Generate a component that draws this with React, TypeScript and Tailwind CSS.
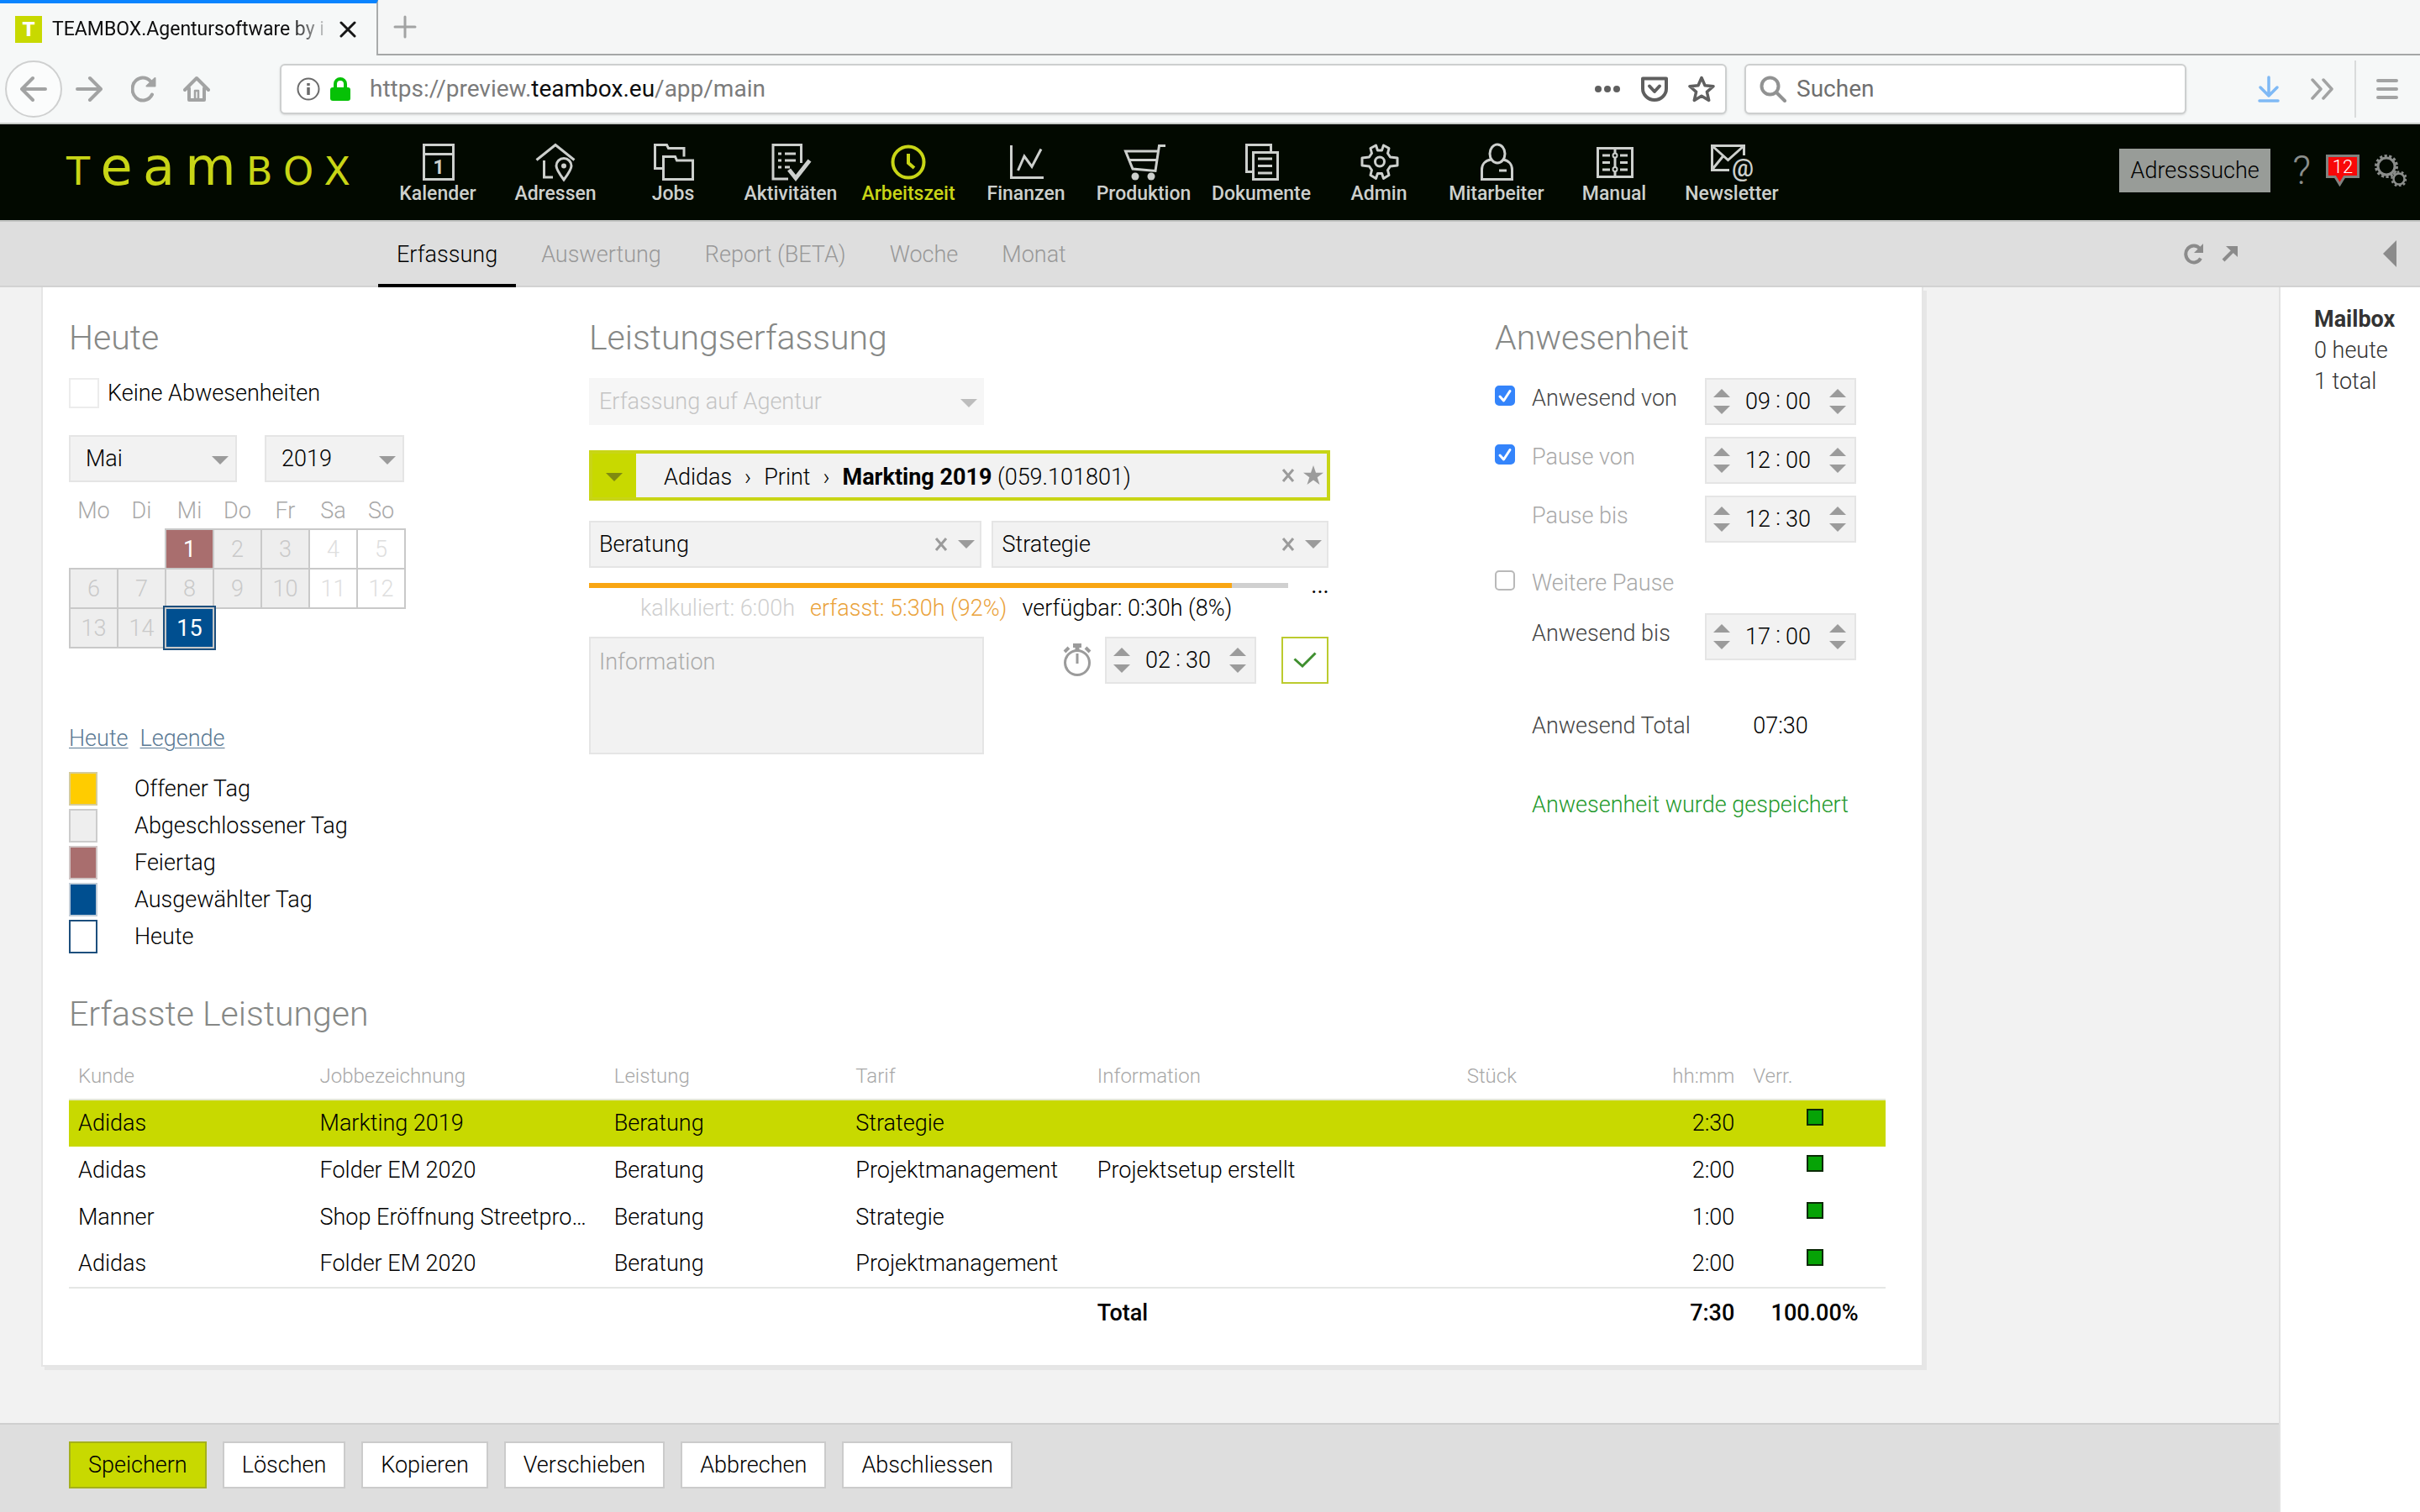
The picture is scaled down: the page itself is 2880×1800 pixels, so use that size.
import type { ReactNode } from "react";

/* ---------- helpers ---------- */

function Down({ className = "text-[#9b9b9b]" }: { className?: string }) {
  return (
    <svg viewBox="0 0 20 10" className={`pointer-events-none h-[10px] w-5 shrink-0 ${className}`} fill="currentColor" aria-hidden="true">
      <path d="M0 0h20L10 10z" />
    </svg>
  );
}

function Cross() {
  return (
    <svg viewBox="0 0 16 16" className="h-4 w-4" stroke="#9b9b9b" strokeWidth="3" aria-hidden="true">
      <path d="M2 1l12 14M14 1L2 15" />
    </svg>
  );
}

/* ---------- browser chrome ---------- */

function BrowserChrome() {
  return (
    <header className="text-[#6f6f6f]">
      <div className="flex h-[66px] bg-[#f5f6f6]">
        <div className="flex w-[450px] items-center border-t-4 border-r-2 border-t-[#0a84ff] border-r-[#a9abab] bg-[#f6f8f8] pl-[18px] pr-6">
          <span className="flex h-8 w-8 shrink-0 items-center justify-center bg-[#c8d900] text-[24px] font-black leading-none text-white">T</span>
          <span className="ml-3 flex-1 whitespace-nowrap bg-linear-to-r from-[#0c0c0d] from-85% to-transparent bg-clip-text text-[23px] text-transparent">
            TEAMBOX.Agentursoftware by i
          </span>
          <button aria-label="Tab schliessen" className="ml-2">
            <svg viewBox="0 0 20 20" className="h-5 w-5" stroke="#161616" strokeWidth="3" strokeLinecap="round">
              <path d="M2 2l16 16M18 2L2 18" />
            </svg>
          </button>
        </div>
        <div className="flex flex-1 items-center border-b-2 border-[#a5a7a7] pl-[18px]">
          <button aria-label="Neuer Tab">
            <svg viewBox="0 0 28 28" className="h-7 w-7" stroke="#a2a3a3" strokeWidth="3" strokeLinecap="round">
              <path d="M14 2v24M2 14h24" />
            </svg>
          </button>
        </div>
      </div>
      <div className="flex h-[82px] items-center border-b-2 border-[#c9ccc9] bg-[#f6f8f8] pl-[6px] pr-[26px] text-[#a2a3a3]">
        <button aria-label="Zurück" className="flex h-[68px] w-[68px] items-center justify-center rounded-full border-2 border-[#cfd0d0] bg-[#fbfcfc]">
          <svg viewBox="0 0 32 32" className="h-8 w-8" fill="none" stroke="currentColor" strokeWidth="4" strokeLinecap="round" strokeLinejoin="round">
            <path d="M30 16H3M15 3L2 16l13 13" />
          </svg>
        </button>
        <button aria-label="Vor" className="ml-4">
          <svg viewBox="0 0 32 32" className="h-8 w-8" fill="none" stroke="currentColor" strokeWidth="4" strokeLinecap="round" strokeLinejoin="round">
            <path d="M2 16h27M17 3l13 13-13 13" />
          </svg>
        </button>
        <button aria-label="Neu laden" className="ml-[34px]">
          <svg viewBox="0 0 32 32" className="h-8 w-8" fill="none" stroke="currentColor" strokeWidth="4" strokeLinecap="round">
            <path d="M25 22.500A12.500 13.500 0 1 1 25 9.500" />
            <path d="M28.500 3v9.500H18.500z" fill="currentColor" strokeWidth="2" strokeLinejoin="round" />
          </svg>
        </button>
        <button aria-label="Startseite" className="ml-[30px]">
          <svg viewBox="0 0 32 32" className="h-8 w-8" fill="none" stroke="currentColor" strokeWidth="4" strokeLinecap="round" strokeLinejoin="round">
            <path d="M2 17L16 3l14 14M7 15v14h18V15" />
            <path d="M14 18h4v10h-4z" strokeWidth="2.500" />
          </svg>
        </button>
        <div className="ml-[83px] flex h-[60px] flex-1 items-center rounded-md border-2 border-[#cdcfcf] bg-white pl-[18px] pr-3 shadow-sm">
          <svg viewBox="0 0 28 28" className="h-7 w-7 shrink-0" fill="none" stroke="#6b6b6b" strokeWidth="2">
            <circle cx="14" cy="14" r="12.500" />
            <path d="M14 12v9M14 7v3" strokeWidth="3.500" />
          </svg>
          <svg viewBox="0 0 24 28" className="ml-3 h-7 w-6 shrink-0" fill="#06c106">
            <path d="M6 13V8a6 6 0 0 1 12 0v5" fill="none" stroke="#06c106" strokeWidth="4" />
            <rect y="12" width="24" height="16" rx="3" />
          </svg>
          <a href="#url" className="ml-[23px] text-[28px] text-[#7b7b7b]">
            https://preview.<span className="text-[#0c0c0d]">teambox.eu</span>/app/main
          </a>
          <span className="flex-1" />
          <button aria-label="Seitenaktionen">
            <svg viewBox="0 0 32 32" className="h-8 w-8" fill="#5f5f5f">
              <circle cx="5" cy="16" r="4" />
              <circle cx="16" cy="16" r="4" />
              <circle cx="27" cy="16" r="4" />
            </svg>
          </button>
          <button aria-label="Pocket" className="ml-6">
            <svg viewBox="0 0 32 32" className="h-8 w-8" fill="none" stroke="#5f5f5f" strokeWidth="4" strokeLinecap="round" strokeLinejoin="round">
              <path d="M2 3.500h28v12a14 13.500 0 0 1-28 0z" />
              <path d="M10 12.500l6 6.500 6-6.500" />
            </svg>
          </button>
          <button aria-label="Lesezeichen" className="ml-6">
            <svg viewBox="0 0 32 32" className="h-8 w-8" fill="none" stroke="#5f5f5f" strokeWidth="3.500" strokeLinejoin="round">
              <path d="M16 2.500l4 9.300 10 .9-7.600 6.700 2.300 10L16 24.200l-8.700 5.200 2.300-10L2 12.700l10-.9z" />
            </svg>
          </button>
        </div>
        <label className="ml-[21px] flex h-[60px] w-[526px] items-center rounded-md border-2 border-[#cdcfcf] bg-white pl-4 shadow-sm">
          <svg viewBox="0 0 32 32" className="h-8 w-8 shrink-0" fill="none" stroke="#919292" strokeWidth="4" strokeLinecap="round">
            <circle cx="12.500" cy="12.500" r="10" />
            <path d="M20 20l10 10" />
          </svg>
          <input aria-label="Suchen" placeholder="Suchen" className="ml-3 w-full min-w-0 bg-transparent text-[28px] outline-none placeholder:text-[#6f6f6f]" />
        </label>
        <button aria-label="Downloads" className="ml-[84px]">
          <svg viewBox="0 0 28 32" className="h-8 w-7" fill="none" stroke="#7fb9f5" strokeWidth="3.500" strokeLinecap="round" strokeLinejoin="round">
            <path d="M14 2v21M4 14l10 10 10-10M3 30h22" />
          </svg>
        </button>
        <button aria-label="Mehr Werkzeuge" className="ml-9">
          <svg viewBox="0 0 28 28" className="h-7 w-7" fill="none" stroke="currentColor" strokeWidth="3.500" strokeLinecap="round" strokeLinejoin="round">
            <path d="M2 3l10 11L2 25M15 3l10 11-10 11" />
          </svg>
        </button>
        <span className="mx-6 h-[68px] w-[2px] bg-[#d9dbdb]" />
        <button aria-label="Menü">
          <svg viewBox="0 0 26 26" className="h-[26px] w-[26px]" stroke="currentColor" strokeWidth="4" strokeLinecap="round">
            <path d="M2 3h22M2 13h22M2 23h22" />
          </svg>
        </button>
      </div>
    </header>
  );
}

/* ---------- application header ---------- */

const modules: { label: string; active?: boolean; icon: ReactNode }[] = [
  {
    label: "Kalender",
    icon: (
      <>
        <path d="M7.500 3.500h35v41h-35zM7.500 14.500h35" />
        <text x="25" y="38" textAnchor="middle" fontSize="23" fontWeight="700" fill="currentColor" stroke="none">1</text>
      </>
    ),
  },
  {
    label: "Adressen",
    icon: (
      <>
        <path d="M1.500 21.500L24 3.500l22.500 18M10.500 22v20H21" />
        <path d="M34 45c-6-8-9-12.500-9-16.500a9 9 0 0 1 18 0c0 4-3 8.500-9 16.500z" />
        <circle cx="34" cy="28.500" r="3" fill="currentColor" stroke="none" />
      </>
    ),
  },
  {
    label: "Jobs",
    icon: (
      <>
        <path d="M11 31.500H2.500V3.500h14l2 4h18.500v10" />
        <path d="M12.500 44.500v-27h14l2 4.500h19v22.500z" />
      </>
    ),
  },
  {
    label: "Aktivitäten",
    icon: (
      <>
        <path d="M21 44H3V3.500h33.500V25" />
        <path d="M9 14h4M9 22h4M9 30h4M17 14h13M17 22h13M17 30h6" />
        <path d="M22 33l8 10 16.500-21" strokeWidth="5" />
      </>
    ),
  },
  {
    label: "Arbeitszeit",
    active: true,
    icon: (
      <>
        <circle cx="24" cy="24" r="18.500" strokeWidth="4" />
        <path d="M24 14v11l7 6" strokeWidth="4" />
      </>
    ),
  },
  {
    label: "Finanzen",
    icon: <path d="M6.500 4v38.500H45M14.500 34L22 17l9 12.500L42 8.500" />,
  },
  {
    label: "Produktion",
    icon: (
      <>
        <path d="M50 4.500h-7.500L38 34.500l-27-2.500L2.500 11H41M6 21.500h34" />
        <circle cx="14" cy="41" r="4.500" fill="currentColor" stroke="none" />
        <circle cx="33" cy="41" r="4.500" fill="currentColor" stroke="none" />
      </>
    ),
  },
  {
    label: "Dokumente",
    icon: (
      <>
        <path d="M13 35.500H6.500v-32h29V11" />
        <path d="M14.500 12.500h29v32h-29zM20 20h17M20 28.500h17M20 37h17" />
      </>
    ),
  },
  {
    label: "Admin",
    icon: (
      <>
        <path
          d="M20.500 4l2 6h5l2-6 6.500 3.500-1.500 6 3 4.500 8.500 1v9l-8.500 1-3 4.500 1.500 6-6.500 4-2-6h-5l-2 6-6.500-4 1.500-6-3-4.500-8.500-1v-9l8.500-1 3-4.500-1.500-6z"
          strokeLinejoin="round"
        />
        <circle cx="25" cy="23.500" r="5.500" />
      </>
    ),
  },
  {
    label: "Mitarbeiter",
    icon: (
      <>
        <ellipse cx="25" cy="14" rx="9" ry="11" />
        <path d="M17.500 21C10 22 6.500 27 6.500 33v11.500h36V33c0-6-3.500-11-11-12M27 34h9" />
      </>
    ),
  },
  {
    label: "Manual",
    icon: (
      <>
        <path d="M4.500 7.500h41v34h-41zM25 7.500v6M25 18v12M25 35v6M10 16h9M10 24.500h9M10 33h9M31 16h9M31 24.500h9M31 33h9" />
        <circle cx="25" cy="16" r="2.500" strokeWidth="2" />
        <circle cx="25" cy="32.500" r="2.500" strokeWidth="2" />
      </>
    ),
  },
  {
    label: "Newsletter",
    icon: (
      <>
        <path d="M21 33.500H.500V4.500h38V16M.500 4.500l19 17 19-17M.500 33l13-16" />
        <text x="37" y="41" textAnchor="middle" fontSize="29" fontWeight="500" fill="currentColor" stroke="none">@</text>
      </>
    ),
  },
];

function AppHeader() {
  return (
    <div className="flex h-[116px] items-center border-b-2 border-[#c2c4c2] bg-[#020900] pl-[79px] pr-4">
      <a href="#home" aria-label="TEAMBOX" className="flex h-16 w-[338px] items-baseline justify-between font-['DejaVu_Sans'] font-normal leading-[52px] text-[#c8d516]">
        <span className="text-[46px]">T</span>
        <span className="text-[62px]">e</span>
        <span className="text-[62px]">a</span>
        <span className="text-[62px]">m</span>
        <span className="text-[46px]">B</span>
        <span className="text-[46px]">O</span>
        <span className="text-[46px]">X</span>
      </a>
      <nav className="ml-[34px] flex pt-[3px]">
        {modules.map((m) => (
          <a key={m.label} href={`#${m.label}`} className={`flex w-[140px] flex-col items-center ${m.active ? "text-[#c8d516]" : "text-[#cdd0cd]"}`}>
            <svg viewBox="0 0 48 48" className="h-12 w-12 overflow-visible" fill="none" stroke="currentColor" strokeWidth="3" aria-hidden="true">
              {m.icon}
            </svg>
            <span className="text-[23px] font-medium leading-[28px]">{m.label}</span>
          </a>
        ))}
      </nav>
      <span className="flex-1" />
      <div className="flex items-center pb-1">
        <button className="h-[52px] w-[180px] bg-[#989c98] text-[27px] font-light text-black">Adresssuche</button>
        <button aria-label="Hilfe" className="ml-[26px] text-[48px] font-light leading-[48px] text-[#8b8e8b]">?</button>
        <button aria-label="Nachrichten" className="relative ml-[18px]">
          <svg viewBox="0 0 40 38" className="h-[38px] w-10" fill="#f80808" stroke="#7f827f" strokeWidth="3" aria-hidden="true">
            <path d="M1.500 1.500h37v25H22l-5.500 9-5.500-9H1.500z" />
          </svg>
          <span className="absolute inset-x-0 top-0 text-center text-[22px] leading-[29px] text-white">12</span>
        </button>
        <button aria-label="Einstellungen" className="ml-[18px]">
          <svg viewBox="0 0 38 38" className="h-[38px] w-[38px]" fill="none" stroke="#8b8e8b" aria-hidden="true">
            <circle cx="14" cy="14" r="12.500" strokeWidth="3" strokeDasharray="3.200 2.410" />
            <circle cx="14" cy="14" r="10" strokeWidth="3" />
            <circle cx="29" cy="29" r="8.500" strokeWidth="2.500" strokeDasharray="2.700 2.640" />
            <circle cx="29" cy="29" r="6.500" strokeWidth="2.500" />
          </svg>
        </button>
      </div>
    </div>
  );
}

function SubNav() {
  const tabs = ["Erfassung", "Auswertung", "Report (BETA)", "Woche", "Monat"];
  return (
    <div className="flex h-[78px] items-stretch border-b-2 border-[#d2d2d2] bg-[#dedede] pl-[450px] pr-7 text-[27px] font-light">
      <nav className="flex gap-2">
        {tabs.map((t, i) => (
          <a
            key={t}
            href={`#${t}`}
            className={`-mb-[2px] flex items-center px-[22px] pt-1 ${i === 0 ? "border-b-4 border-black text-black" : "border-b-4 border-transparent text-[#989898]"}`}
          >
            {t}
          </a>
        ))}
      </nav>
      <span className="flex-1" />
      <button aria-label="Aktualisieren">
        <svg viewBox="0 0 26 26" className="h-[26px] w-[26px]" fill="none" stroke="#8b8b8b" strokeWidth="4">
          <path d="M21 18.500A9.500 10 0 1 1 20 7" />
          <path d="M24 1v11H13z" fill="#8b8b8b" stroke="none" />
        </svg>
      </button>
      <button aria-label="In neuem Fenster" className="ml-5">
        <svg viewBox="0 0 20 20" className="h-5 w-5" fill="none" stroke="#8b8b8b" strokeWidth="4">
          <path d="M2 18L16 4" />
          <path d="M5 1h14v13z" fill="#8b8b8b" stroke="none" />
        </svg>
      </button>
      <button aria-label="Seitenleiste einklappen" className="ml-[172px]">
        <svg viewBox="0 0 16 32" className="h-8 w-4" fill="#8b8b8b">
          <path d="M16 0v32L0 16z" />
        </svg>
      </button>
    </div>
  );
}

/* ---------- form pieces ---------- */

function Heading({ children }: { children: ReactNode }) {
  return <h2 className="text-[41px] font-light leading-[48px] text-[#868886]">{children}</h2>;
}

function PlainSelect({ label, value, className, disabled }: { label: string; value: string; className: string; disabled?: boolean }) {
  return (
    <div className={`relative h-14 ${className} ${disabled ? "bg-[#f6f6f6] text-[#c4c4c4]" : "border-2 border-[#e5e5e5] bg-[#f2f2f2] text-black"}`}>
      <select aria-label={label} disabled={disabled} className={`h-full w-full appearance-none bg-transparent opacity-100 outline-none ${disabled ? "pl-3" : "pl-[18px]"}`}>
        <option>{value}</option>
      </select>
      <span className="pointer-events-none absolute inset-y-0 right-2 flex items-center pt-1">
        <Down className={disabled ? "text-[#bdbdbd]" : "text-[#9b9b9b]"} />
      </span>
    </div>
  );
}

function ClearableSelect({ label, value, className }: { label: string; value: string; className: string }) {
  return (
    <div className={`flex h-14 items-center border-2 border-[#e5e5e5] bg-[#f2f2f2] pl-[10px] pr-[6px] ${className}`}>
      <select aria-label={label} className="h-full min-w-0 flex-1 appearance-none bg-transparent outline-none">
        <option>{value}</option>
      </select>
      <button aria-label={`${label} leeren`} className="mr-3">
        <Cross />
      </button>
      <Down />
    </div>
  );
}

function Spinner({ label }: { label: string }) {
  return (
    <span className="flex flex-col gap-[10px]">
      <button aria-label={`${label} erhöhen`}>
        <svg viewBox="0 0 20 10" className="h-[10px] w-5" fill="#9b9b9b">
          <path d="M0 10h20L10 0z" />
        </svg>
      </button>
      <button aria-label={`${label} verringern`}>
        <Down />
      </button>
    </span>
  );
}

function TimeField({ label, h, m }: { label: string; h: string; m: string }) {
  return (
    <div className="flex h-14 w-[180px] items-center justify-between border-2 border-[#e5e5e5] bg-[#f2f2f2] pl-2 pr-[10px] text-[27px] text-black">
      <Spinner label={`${label} Stunden`} />
      <span className="flex items-center pr-1">
        <input aria-label={`${label} Stunden`} defaultValue={h} className="w-9 bg-transparent text-center outline-none" />
        <span className="w-3 pb-1 text-center">:</span>
        <input aria-label={`${label} Minuten`} defaultValue={m} className="w-9 bg-transparent text-center outline-none" />
      </span>
      <Spinner label={`${label} Minuten`} />
    </div>
  );
}

function BlueCheckbox({ id, checked }: { id: string; checked?: boolean }) {
  return (
    <span className="relative mt-[9px] h-6 w-6">
      <input
        id={id}
        type="checkbox"
        defaultChecked={checked}
        className="block h-6 w-6 appearance-none rounded-[5px] border-2 border-[#b9b9b9] bg-white checked:border-[#3484fb] checked:bg-[#3484fb]"
      />
      {checked && (
        <svg viewBox="0 0 24 24" className="pointer-events-none absolute inset-0 h-6 w-6" fill="none" stroke="#fff" strokeWidth="3" strokeLinecap="round" strokeLinejoin="round">
          <path d="M6 13l4.500 5L18 6.500" />
        </svg>
      )}
    </span>
  );
}

/* ---------- columns ---------- */

type Day = { n: number; kind: "done" | "weekend" | "holiday" | "selected" } | null;
const weeks: Day[][] = [
  [null, null, { n: 1, kind: "holiday" }, { n: 2, kind: "done" }, { n: 3, kind: "done" }, { n: 4, kind: "weekend" }, { n: 5, kind: "weekend" }],
  [
    { n: 6, kind: "done" },
    { n: 7, kind: "done" },
    { n: 8, kind: "done" },
    { n: 9, kind: "done" },
    { n: 10, kind: "done" },
    { n: 11, kind: "weekend" },
    { n: 12, kind: "weekend" },
  ],
  [{ n: 13, kind: "done" }, { n: 14, kind: "done" }, { n: 15, kind: "selected" }, null, null, null, null],
];
const dayStyles = {
  done: "bg-[#eeeeee] text-[#c9c9c9]",
  weekend: "bg-white text-[#dedede]",
  holiday: "bg-[#a96e6e] text-white font-normal",
  selected: "bg-[#004f90] text-white font-normal outline-2 outline-offset-2 outline-[#1d4f7d]",
};

const legend = [
  { label: "Offener Tag", swatch: "border-[#d5cc9a] bg-[#ffcc00]" },
  { label: "Abgeschlossener Tag", swatch: "border-[#cccccc] bg-[#eeeeee]" },
  { label: "Feiertag", swatch: "border-[#d0c5c5] bg-[#a96e6e]" },
  { label: "Ausgewählter Tag", swatch: "border-[#c2cdd8] bg-[#004f90]" },
  { label: "Heute", swatch: "border-[#1d4f7d] bg-white" },
];

function TodayColumn() {
  return (
    <section>
      <Heading>Heute</Heading>
      <label className="mt-6 flex h-9 items-center">
        <input type="checkbox" className="mr-[10px] h-9 w-9 appearance-none border-2 border-[#ececec] bg-white" />
        Keine Abwesenheiten
      </label>
      <div className="mt-8 flex gap-[33px]">
        <PlainSelect label="Monat" value="Mai" className="w-[200px]" />
        <PlainSelect label="Jahr" value="2019" className="w-[166px]" />
      </div>
      <table className="mt-[14px] table-fixed border-collapse text-center">
        <thead>
          <tr className="h-[42px] align-top text-[#a8a8a8]">
            {["Mo", "Di", "Mi", "Do", "Fr", "Sa", "So"].map((d) => (
              <th key={d} className="w-[57px] p-0 font-light leading-[40px]">{d}</th>
            ))}
          </tr>
        </thead>
        <tbody>
          {weeks.map((w, i) => (
            <tr key={i}>
              {w.map((d, j) =>
                d ? (
                  <td key={j} className="border-2 border-[#c9c9c9] p-0">
                    <button className={`block h-[45px] w-[55px] leading-[40px] ${dayStyles[d.kind]}`}>{d.n}</button>
                  </td>
                ) : (
                  <td key={j} />
                ),
              )}
            </tr>
          ))}
        </tbody>
      </table>
      <p className="mt-[89px] flex gap-[14px] leading-[36px] text-[#5b7a94]">
        <a href="#heute" className="underline decoration-1 underline-offset-2">Heute</a>
        <a href="#legende" className="underline decoration-1 underline-offset-2">Legende</a>
      </p>
      <ul className="mt-[22px] flex flex-col gap-1">
        {legend.map((l) => (
          <li key={l.label} className="flex h-10 items-center">
            <span className={`mr-[44px] h-10 w-[34px] border-2 ${l.swatch}`} />
            {l.label}
          </li>
        ))}
      </ul>
    </section>
  );
}

function EntryColumn() {
  return (
    <section className="max-w-[882px]">
      <Heading>Leistungserfassung</Heading>
      <PlainSelect label="Erfassung" value="Erfassung auf Agentur" className="mt-6 w-[470px]" disabled />
      <div className="mt-[30px] flex h-[60px] border-4 border-[#c8d516] bg-[#f2f2f2]">
        <button aria-label="Job auswählen" className="flex w-[52px] items-center justify-center bg-[#c8d900] pt-1">
          <Down className="text-[#7f8a10]" />
        </button>
        <p className="flex flex-1 items-center gap-[15px] pl-[33px] pt-1">
          <span>Adidas</span>
          <span>›</span>
          <span>Print</span>
          <span>›</span>
          <span>
            <b className="font-bold">Markting 2019</b> (059.101801)
          </span>
        </p>
        <button aria-label="Job leeren" className="mr-[10px]">
          <Cross />
        </button>
        <button aria-label="Favorit" className="mr-1">
          <svg viewBox="0 0 24 24" className="h-6 w-6" fill="#9b9b9b">
            <path d="M12 0l3 8.800h9l-7.300 5.400L19.500 23 12 17.600 4.500 23l2.800-8.800L0 8.800h9z" />
          </svg>
        </button>
      </div>
      <div className="mt-6 flex gap-3 pr-[2px]">
        <ClearableSelect label="Leistung" value="Beratung" className="flex-[468_1_0%]" />
        <ClearableSelect label="Tarif" value="Strategie" className="flex-[398_1_0%]" />
      </div>
      <div className="mt-[18px] flex h-[6px] items-center">
        <div className="h-[6px] flex-1 bg-[#d0d0d0]" role="progressbar" aria-label="Budget" aria-valuenow={92} aria-valuemin={0} aria-valuemax={100}>
          <div className="h-full w-[92%] bg-[#f9a613]" />
        </div>
        <button aria-label="Details" className="ml-[26px] w-6 text-center font-normal leading-none">...</button>
      </div>
      <p className="mt-[6px] flex gap-[18px] pl-[61px] leading-[36px]">
        <span className="text-[#cfcfcf]">kalkuliert: 6:00h</span>
        <span className="text-[#eaa23a]">erfasst: 5:30h (92%)</span>
        <span>verfügbar: 0:30h (8%)</span>
      </p>
      <div className="mt-4 flex items-start pr-[2px]">
        <textarea
          aria-label="Information"
          placeholder="Information"
          className="block h-[140px] w-[470px] resize-none border-2 border-[#e5e5e5] bg-[#f2f2f2] px-[10px] py-2 outline-none placeholder:text-[#aaaaaa]"
        />
        <span className="flex-1" />
        <button aria-label="Stoppuhr" className="mr-4 mt-2">
          <svg viewBox="0 0 34 40" className="h-10 w-[34px]" fill="none" stroke="#9b9b9b" strokeWidth="3">
            <circle cx="17" cy="23" r="14.500" />
            <path d="M17 12v12" />
            <path d="M12 2.500h10M17 2v7" strokeWidth="5" />
            <path d="M2 10l5-5M32 10l-5-5" strokeWidth="4" />
          </svg>
        </button>
        <TimeField label="Dauer" h="02" m="30" />
        <button aria-label="Übernehmen" className="ml-[30px] flex h-14 w-14 items-center justify-center border-2 border-[#bccb2e] bg-white">
          <svg viewBox="0 0 28 20" className="h-5 w-7" fill="none" stroke="#3f8f2f" strokeWidth="3">
            <path d="M1.500 8.500L11 17 26.500 1.500" />
          </svg>
        </button>
      </div>
    </section>
  );
}

function PresenceColumn() {
  const row = "grid grid-cols-[44px_206px_1fr] items-start";
  return (
    <section className="text-[#454545]">
      <Heading>Anwesenheit</Heading>
      <div className={`${row} mt-6 h-[70px]`}>
        <BlueCheckbox id="von" checked />
        <label htmlFor="von" className="pt-1 leading-[40px]">Anwesend von</label>
        <TimeField label="Anwesend von" h="09" m="00" />
      </div>
      <div className={`${row} h-[70px]`}>
        <BlueCheckbox id="pause" checked />
        <label htmlFor="pause" className="pt-1 leading-[40px] text-[#a8a8a8]">Pause von</label>
        <TimeField label="Pause von" h="12" m="00" />
      </div>
      <div className={`${row} h-[70px]`}>
        <span />
        <span className="pt-1 leading-[40px] text-[#a8a8a8]">Pause bis</span>
        <TimeField label="Pause bis" h="12" m="30" />
      </div>
      <div className={`${row} mt-[10px] h-[60px]`}>
        <BlueCheckbox id="weitere" />
        <label htmlFor="weitere" className="pt-1 leading-[40px] text-[#a8a8a8]">Weitere Pause</label>
      </div>
      <div className={`${row} h-[110px]`}>
        <span />
        <span className="pt-1 leading-[40px]">Anwesend bis</span>
        <TimeField label="Anwesend bis" h="17" m="00" />
      </div>
      <div className={`${row} h-[94px]`}>
        <span />
        <span className="pt-1 leading-[40px]">Anwesend Total</span>
        <span className="w-[180px] pt-1 text-center leading-[40px] text-black">07:30</span>
      </div>
      <p className="pl-[44px] pt-1 leading-[40px] text-[#23992b]">Anwesenheit wurde gespeichert</p>
    </section>
  );
}

/* ---------- table ---------- */

const rows = [
  ["Adidas", "Markting 2019", "Beratung", "Strategie", "", "2:30"],
  ["Adidas", "Folder EM 2020", "Beratung", "Projektmanagement", "Projektsetup erstellt", "2:00"],
  ["Manner", "Shop Eröffnung Streetpro…", "Beratung", "Strategie", "", "1:00"],
  ["Adidas", "Folder EM 2020", "Beratung", "Projektmanagement", "", "2:00"],
];

function EntriesTable() {
  return (
    <section className="mt-12">
      <Heading>Erfasste Leistungen</Heading>
      <table className="mt-[22px] w-full table-fixed border-collapse">
        <colgroup>
          <col className="w-[13.3%]" />
          <col className="w-[16.2%]" />
          <col className="w-[13.3%]" />
          <col className="w-[13.3%]" />
          <col className="w-[17.6%]" />
          <col className="w-[9.25%]" />
          <col className="w-[9.25%]" />
          <col className="w-[7.8%]" />
        </colgroup>
        <thead>
          <tr className="h-[56px] border-b-2 border-[#e5e8d5] text-left text-[24px] text-[#a8a8a8]">
            <th className="px-[11px] font-light">Kunde</th>
            <th className="px-[11px] font-light">Jobbezeichnung</th>
            <th className="px-[11px] font-light">Leistung</th>
            <th className="px-[11px] font-light">Tarif</th>
            <th className="px-[11px] font-light">Information</th>
            <th className="px-[11px] text-center font-light">Stück</th>
            <th className="px-[11px] text-right font-light">hh:mm</th>
            <th className="px-[11px] font-light">Verr.</th>
          </tr>
        </thead>
        <tbody>
          {rows.map((r, i) => (
            <tr key={i} className={`h-[56px] ${i === 0 ? "bg-[#c8d900]" : ""}`}>
              <td className="px-[11px]">{r[0]}</td>
              <td className="truncate pl-[11px]">{r[1]}</td>
              <td className="px-[11px]">{r[2]}</td>
              <td className="px-[11px]">{r[3]}</td>
              <td className="px-[11px]">{r[4]}</td>
              <td />
              <td className="px-[11px] text-right">{r[5]}</td>
              <td className="pt-[10px] align-top">
                <span className="mx-auto block h-5 w-5 border-2 border-[#0b2a06] bg-[#06a306]" />
              </td>
            </tr>
          ))}
        </tbody>
        <tfoot>
          <tr className="h-[60px] border-t-2 border-[#e5e7e5] font-medium">
            <td colSpan={4} />
            <td className="px-[11px]">Total</td>
            <td />
            <td className="px-[11px] text-right">7:30</td>
            <td className="px-0 text-center">100.00%</td>
          </tr>
        </tfoot>
      </table>
    </section>
  );
}

/* ---------- page ---------- */

const actions = ["Löschen", "Kopieren", "Verschieben", "Abbrechen", "Abschliessen"];

export default function App() {
  return (
    <div className="flex min-h-screen flex-col bg-[#f2f2f2] font-[Roboto,sans-serif] text-[27px] font-light text-black">
      <div className="font-normal">
        <BrowserChrome />
      </div>
      <AppHeader />
      <SubNav />
      <div className="flex flex-1">
        <div className="flex min-w-0 flex-1 flex-col">
          <main className="ml-[49px] mr-[423px] border-x-2 border-b-2 border-[#e5e5e5] bg-white pb-8 pl-[31px] pr-[43px] pt-9 shadow-[4px_4px_0_#e6e6e6]">
            <div className="grid grid-cols-[619px_minmax(0,1fr)_465px]">
              <TodayColumn />
              <EntryColumn />
              <PresenceColumn />
            </div>
            <EntriesTable />
          </main>
          <footer className="mt-auto flex h-[106px] gap-[19px] border-t-2 border-[#cfcfcf] bg-[#dedede] pl-[82px] pt-5">
            <button className="h-14 border-2 border-[#a4b01c] bg-[#c8d900] px-[21px]">Speichern</button>
            {actions.map((a) => (
              <button key={a} className="h-14 border-2 border-[#cbcbcb] bg-white px-[21px]">{a}</button>
            ))}
          </footer>
        </div>
        <aside className="w-[168px] border-l-2 border-[#e2e2e2] bg-white pl-10 pt-5 leading-[37px] text-[#333]">
          <h3 className="text-[27px] font-bold">Mailbox</h3>
          <p>0 heute</p>
          <p>1 total</p>
        </aside>
      </div>
    </div>
  );
}
